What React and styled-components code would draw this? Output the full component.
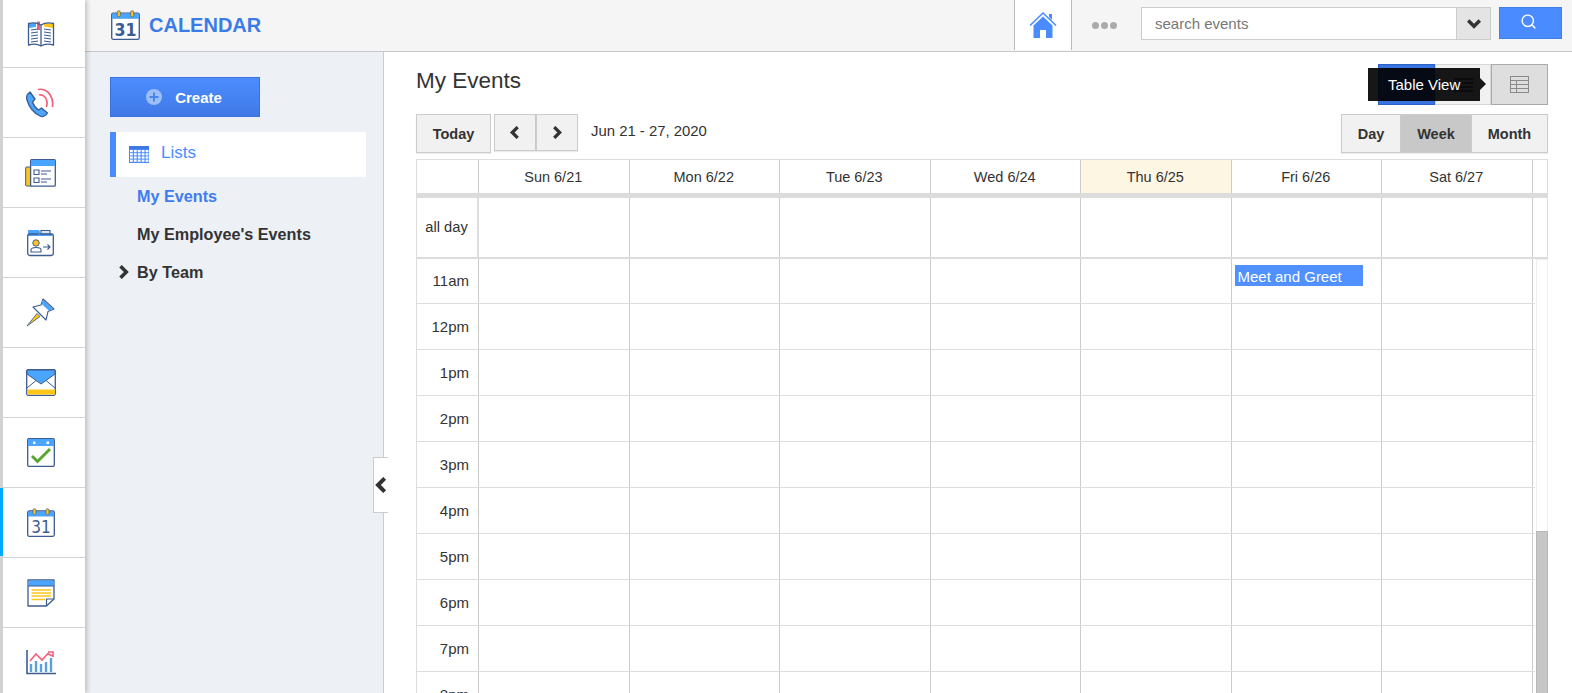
import React from "react";
import styled, { createGlobalStyle } from "styled-components";
import { Search } from "lucide-react";

const GlobalStyle = createGlobalStyle`
  html, body {
    margin: 0;
    padding: 0;
    height: 100%;
    overflow: hidden;
    background: #fff;
    font-family: "Liberation Sans", Arial, sans-serif;
    color: #333;
  }
  * {
    box-sizing: border-box;
  }
`;

const INK = "#3d5c8f";
const SKY = "#4aa5ff";
const GOLD = "#ffc61a";
const ROSE = "#f2607c";
const GRID_COLUMNS = "62px repeat(7, 150.5px)";

const Page = styled.div`
  display: flex;
  height: 100vh;
  overflow: hidden;
`;

const Rail = styled.nav`
  width: 85px;
  flex: none;
  border-left: 3px solid #d2d2d2;
  background: #fff;
  box-shadow: 2px 0 5px rgba(0, 0, 0, 0.22);
  position: relative;
  z-index: 3;
`;

const RailItem = styled.div`
  height: 70px;
  display: flex;
  align-items: center;
  justify-content: center;
  border-bottom: 1px solid #d4d4d4;
  position: relative;
  padding-right: 7px;

  &:first-child {
    height: 68px;
  }

  ${(p) =>
    p.$active &&
    `
    &::before {
      content: "";
      position: absolute;
      left: -3px;
      top: 0;
      bottom: 1px;
      width: 3px;
      background: #00aaff;
    }
  `}
`;

const Column = styled.div`
  flex: 1;
  min-width: 0;
  display: flex;
  flex-direction: column;
`;

const TopBar = styled.header`
  height: 52px;
  flex: none;
  display: flex;
  align-items: stretch;
  background: #f5f5f5;
  border-bottom: 1px solid #c8c8c8;
  padding: 0 10px 0 26px;
`;

const Brand = styled.div`
  display: flex;
  align-items: center;
  gap: 9px;
  flex: 1;
  font-size: 20px;
  font-weight: bold;
  color: #3b7be8;
`;

const HomeCell = styled.div`
  width: 58px;
  height: 50px;
  display: flex;
  align-items: center;
  justify-content: center;
  background: #fff;
  border-left: 1px solid #bbb;
  border-right: 1px solid #bbb;
`;

const Dots = styled.div`
  width: 69px;
  padding-right: 5px;
  display: flex;
  align-items: center;
  justify-content: center;
  gap: 2px;
  span {
    width: 7px;
    height: 7px;
    border-radius: 50%;
    background: #aaa;
  }
`;

const SearchBox = styled.div`
  width: 350px;
  height: 33px;
  margin-top: 7px;
  display: flex;
  border: 1px solid #ccc;
  background: #fff;
`;

const SearchText = styled.div`
  flex: 1;
  padding-left: 13px;
  font-size: 15px;
  line-height: 31px;
  color: #777;
`;

const SearchCaret = styled.div`
  width: 34px;
  display: flex;
  align-items: center;
  justify-content: center;
  background: #e4e4e4;
  border-left: 1px solid #ccc;
`;

const SearchButton = styled.div`
  width: 63px;
  height: 32px;
  margin: 7px 0 0 8px;
  display: flex;
  align-items: center;
  justify-content: center;
  background: #4a8cff;
  border: 1px solid #3f80ee;
  padding-right: 5px;
  padding-bottom: 3px;
`;

const Content = styled.div`
  flex: 1;
  min-height: 0;
  display: flex;
`;

const Sidebar = styled.aside`
  width: 299px;
  flex: none;
  position: relative;
  background: #edf0f5;
  border-right: 1px solid #ccc;
  padding: 25px 0 0 25px;
`;

const CreateButton = styled.div`
  width: 150px;
  height: 40px;
  display: flex;
  align-items: center;
  justify-content: center;
  gap: 13px;
  padding-right: 2px;
  color: #fff;
  font-size: 15px;
  font-weight: bold;
  background: linear-gradient(#4c8dff, #4079e6);
  border: 1px solid #3a72e0;
`;

const ListsRow = styled.div`
  width: 256px;
  height: 45px;
  margin-top: 15px;
  display: flex;
  align-items: center;
  gap: 12px;
  padding-left: 13px;
  background: #fff;
  border-left: 6px solid #4a8cff;
  color: #4a8cff;
  font-size: 17px;
  span {
    margin-top: -3px;
  }
`;

const SideLink = styled.div`
  position: relative;
  margin-left: 27px;
  height: 38px;
  line-height: 38px;
  font-size: 16.2px;
  font-weight: bold;
  color: ${(p) => (p.$current ? "#3f7cf0" : "#333")};
`;

const SideList = styled.div`
  margin-top: 0;
`;

const Caret = styled.span`
  position: absolute;
  left: -20px;
  top: 12px;
  display: flex;
`;

const CollapseHandle = styled.div`
  position: absolute;
  top: 405px;
  right: -5px;
  width: 15px;
  height: 56px;
  padding-left: 2px;
  display: flex;
  align-items: center;
  justify-content: center;
  background: #fff;
  border: 1px solid #ccc;
  border-right: none;
  z-index: 2;
`;

const Main = styled.main`
  flex: 1;
  min-width: 0;
  padding: 12px 24px 0 32px;
  overflow: hidden;
`;

const TitleRow = styled.div`
  height: 41px;
  display: flex;
  justify-content: space-between;
  align-items: flex-start;
`;

const Title = styled.h1`
  margin: 4px 0 0;
  font-size: 22.5px;
  font-weight: normal;
  line-height: 26px;
  color: #333;
`;

const ViewSwitch = styled.div`
  display: flex;
  position: relative;
`;

const ViewButton = styled.div`
  width: ${(p) => p.$width}px;
  height: 41px;
  display: flex;
  align-items: center;
  justify-content: center;
  background: ${(p) =>
    p.$kind === "blue" ? "#3a74e2" : p.$kind === "grey" ? "#dedede" : "#f1f1f1"};
  border: 1px solid
    ${(p) =>
      p.$kind === "blue" ? "#2a62c8" : p.$kind === "grey" ? "#aaa" : "#d6d6d6"};
`;

const Tooltip = styled.div`
  position: absolute;
  left: -10px;
  top: 4px;
  width: 112px;
  height: 33px;
  display: flex;
  align-items: center;
  padding-left: 20px;
  background: rgba(0, 0, 0, 0.91);
  color: #fff;
  font-size: 15px;
  white-space: nowrap;
  z-index: 2;

  &::after {
    content: "";
    position: absolute;
    left: 100%;
    top: 10px;
    border-left: 6px solid rgba(0, 0, 0, 0.91);
    border-top: 6px solid transparent;
    border-bottom: 6px solid transparent;
  }
`;

const ToolRow = styled.div`
  margin-top: 9px;
  height: 39px;
  display: flex;
  align-items: flex-start;
`;

const PlainButton = styled.div`
  height: ${(p) => p.$height || 39}px;
  width: ${(p) => p.$width}px;
  display: flex;
  align-items: center;
  justify-content: center;
  background: ${(p) => (p.$on ? "#c8c8c8" : "#f1f1f1")};
  border: 1px solid #ccc;
  box-shadow: 0 1px 1px rgba(0, 0, 0, 0.08);
  font-size: 14.5px;
  font-weight: bold;
  color: #333;
  margin-left: ${(p) => p.$gap || 0}px;
`;

const DateRange = styled.div`
  margin-left: 13px;
  flex: 1;
  height: 34px;
  line-height: 34px;
  font-size: 14.9px;
  color: #333;
`;

const Segments = styled.div`
  display: flex;
`;

const Board = styled.section`
  margin-top: 6px;
`;

const HeadRow = styled.div`
  display: grid;
  grid-template-columns: ${GRID_COLUMNS} 1fr;
  height: 39px;
  border: 1px solid #ddd;
  border-bottom: 5px solid #dcdcdc;
`;

const HeadCell = styled.div`
  display: flex;
  align-items: center;
  justify-content: center;
  padding-right: 1px;
  font-size: 14.5px;
  color: #333;
  background: ${(p) => (p.$today ? "#fdf6e3" : "#fff")};
  border-right: 1px solid #ccc;
  &:last-child {
    border-right: none;
  }
`;

const AllDayRow = styled(HeadRow)`
  height: 59px;
  border-top: none;
  border-bottom: none;
`;

const AllDayLabel = styled(HeadCell)`
  font-size: 14.7px;
  padding-bottom: 1px;
  border-right: 2px solid #ddd;
`;

const Divider = styled.div`
  height: 2px;
  background: #dcdcdc;
`;

const TimedArea = styled.div`
  display: flex;
`;

const Rows = styled.div`
  flex: 1;
  min-width: 0;
  border-left: 1px solid #ddd;
`;

const HourRow = styled.div`
  display: grid;
  grid-template-columns: ${GRID_COLUMNS};
  height: ${(p) => (p.$first ? 45 : 46)}px;
  border-bottom: 1px solid #ddd;
`;

const HourLabel = styled.div`
  display: flex;
  align-items: center;
  justify-content: flex-end;
  padding-right: 9px;
  padding-bottom: ${(p) => (p.$first ? 1 : 0)}px;
  font-size: 15px;
  color: #333;
  border-right: 1px solid #ccc;
`;

const HourCell = styled.div`
  position: relative;
  border-right: 1px solid #ccc;
`;

const EventChip = styled.div`
  position: absolute;
  left: 3px;
  top: 6px;
  width: 128px;
  height: 21px;
  padding-left: 3px;
  line-height: 23px;
  font-size: 15px;
  color: #fff;
  background: #5091ff;
`;

const ScrollTrack = styled.div`
  width: 12px;
  margin-left: 1px;
  flex: none;
  height: 434px;
  display: flex;
  flex-direction: column;
  justify-content: flex-end;
  border: 1px solid #eee;
  border-bottom: none;
`;

const ScrollThumb = styled.div`
  height: 162px;
  margin: 0 -1px;
  background: #c6c6c6;
  border: 1px solid #b8b8b8;
  border-width: 1px 1px 0;
`;

const Chevron = ({ dir = "right", size = 10, width = 3, color = "#333" }) => {
  const points = {
    right: "3,1 8,6 3,11",
    left: "8,1 3,6 8,11",
    down: "1,3 6,8 11,3",
  }[dir];
  return (
    <svg width={size} height={size} viewBox="0 0 12 12" style={{ flex: "none" }}>
      <polyline points={points} fill="none" stroke={color} strokeWidth={width} />
    </svg>
  );
};

const BookIcon = () => (
  <svg width="30" height="26" viewBox="0 0 30 26" fill="none">
    <path d="M3 3 L12 1 L15 4 V24 L12 22 L2 24 Z" fill="#fff" />
    <path d="M3 3 L10 1.5 V6 L3 7 Z" fill={SKY} />
    <path d="M18 2 L27 3 V7 L18 5.5 Z" fill={GOLD} />
    <path d="M11 0.5 H14 V9 H11 Z" fill={ROSE} />
    <path
      d="M15 4 C12 2 8 1 2.5 2.5 V24 C8 22.5 12 23 15 25 C18 23 22 22.5 27.5 24 V2.5 C22 1 18 2 15 4 V25"
      stroke={INK}
      strokeWidth="1.3"
    />
    <path
      d="M5 9 L12 8 M5 12 L12 11 M5 15 L12 14 M5 18 L12 17 M5 21 L12 20 M18 8 L25 9 M18 11 L25 12 M18 14 L25 15 M18 17 L25 18 M18 20 L25 21"
      stroke={INK}
      strokeWidth="1.1"
    />
  </svg>
);

const PhoneIcon = () => (
  <svg width="30" height="31" viewBox="0 0 30 31" fill="none">
    <path
      d="M4 5 C1 7 0 10 1 13 C3 20 8 26 14 29 C17 30.5 20 28.5 21.5 26 L15.5 21 L12.5 23 C9.5 21 7.5 18 6.5 15 L9 12 Z"
      fill={SKY}
      stroke={INK}
      strokeWidth="1.3"
      strokeLinejoin="round"
    />
    <path d="M12 2.5 C20 1 28 8 26.5 20" stroke={ROSE} strokeWidth="1.7" />
    <path d="M13 8 C18 7 22.5 12 20.5 20" stroke={ROSE} strokeWidth="1.7" />
  </svg>
);

const FormIcon = () => (
  <svg width="31" height="28" viewBox="0 0 31 28" fill="none">
    <rect x="0.7" y="8" width="7" height="19" rx="1" fill={GOLD} stroke={INK} strokeWidth="1" />
    <rect x="5.6" y="0.7" width="24.7" height="26.5" rx="1" fill="#fff" stroke={INK} strokeWidth="1.3" />
    <rect x="6" y="1" width="24" height="6" fill={SKY} />
    <path d="M9 11 H14 V15.5 H9 Z M9 19 H14 V23.5 H9 Z" stroke={INK} strokeWidth="1.1" />
    <path d="M16 12 H26 M16 15 H22 M16 20 H26 M16 23 H22" stroke={INK} strokeWidth="1.2" />
  </svg>
);

const FolderIcon = () => (
  <svg width="27" height="28" viewBox="0 0 27 28" fill="none">
    <path d="M14 4 V1.5 H23 V5" fill="#dbe6f5" stroke={INK} strokeWidth="1.1" />
    <path d="M1 7 V1.5 H12 L14 4.5 H25 V7 Z" fill={SKY} />
    <rect x="0.7" y="5" width="25.6" height="21.5" rx="2" stroke={INK} strokeWidth="1.3" />
    <path d="M1 1.5 H12 V6" stroke={SKY} strokeWidth="1" />
    <circle cx="9" cy="14" r="3.2" fill={GOLD} stroke={INK} strokeWidth="1" />
    <path d="M4 23 V21 C4 19 6 18.5 9 18.5 C12 18.5 14 19 14 21 V23 Z" fill="#fff" stroke={INK} strokeWidth="1.1" />
    <path d="M16 18 H23 M20.5 15.5 L23 18 L20.5 20.5" stroke={INK} strokeWidth="1.1" />
  </svg>
);

const PinIcon = () => (
  <svg width="29" height="29" viewBox="0 0 29 29" fill="none">
    <path d="M1 28 L11 15.5 L14 18.5 Z" fill={GOLD} stroke={INK} strokeWidth="0.9" strokeLinejoin="round" />
    <path
      d="M17 1 L28 11 L22 13.5 L20 22 L7 9 L15 7 Z"
      fill="#fff"
      stroke={INK}
      strokeWidth="1.1"
      strokeLinejoin="round"
    />
    <path d="M17 1.7 L27 11 L23 12.7 L15.7 6 Z" fill={SKY} />
  </svg>
);

const MailIcon = () => (
  <svg width="30" height="27" viewBox="0 0 30 27" fill="none">
    <rect x="0.7" y="0.7" width="28.6" height="25.6" rx="1.5" fill="#fff" stroke={INK} strokeWidth="1.3" />
    <path d="M1 20.5 H29 V25.5 H1 Z" fill={GOLD} />
    <path d="M1 1 H29 V5 L15 15 L1 5 Z" fill={SKY} stroke={INK} strokeWidth="1" strokeLinejoin="round" />
    <path d="M1 19 L10 11.5 M29 19 L20 11.5" stroke={INK} strokeWidth="1" />
  </svg>
);

const CheckIcon = () => (
  <svg width="28" height="29" viewBox="0 0 28 29" fill="none">
    <rect x="0.7" y="0.7" width="26.6" height="27.6" rx="1" fill="#fff" stroke={INK} strokeWidth="1.3" />
    <rect x="1" y="1" width="26" height="7" fill={SKY} />
    <rect x="6" y="3.5" width="2.5" height="2.5" fill="#fff" />
    <rect x="19.5" y="3.5" width="2.5" height="2.5" fill="#fff" />
    <path d="M5 18 L10.5 23.5 L23 11" stroke="#5aa532" strokeWidth="3" />
  </svg>
);

const CalendarIcon = ({ size = 28 }) => (
  <svg width={size} height={(size * 29) / 28} viewBox="0 0 28 29" fill="none">
    <rect x="0.7" y="3" width="26.6" height="25.3" rx="1.5" fill="#fff" stroke={INK} strokeWidth="1.3" />
    <path d="M1 3.5 H27 V8.5 H1 Z" fill={SKY} />
    <rect x="6" y="0.7" width="3" height="6" rx="1.5" fill={GOLD} stroke={INK} strokeWidth="0.7" />
    <rect x="19" y="0.7" width="3" height="6" rx="1.5" fill={GOLD} stroke={INK} strokeWidth="0.7" />
    <text
      x="14"
      y="25"
      textAnchor="middle"
      fontFamily="'DejaVu Sans Condensed', 'DejaVu Sans', sans-serif"
      fontSize="17"
      fill={INK}
    >
      31
    </text>
  </svg>
);

const NoteIcon = () => (
  <svg width="28" height="28" viewBox="0 0 28 28" fill="none">
    <path d="M1 1 H27 V20 L19.5 27 H1 Z" fill="#fff" stroke={INK} strokeWidth="1.3" strokeLinejoin="round" />
    <path d="M1.5 1.5 H26.5 V7 H1.5 Z" fill={SKY} />
    <path d="M1 7 H27" stroke={INK} strokeWidth="1" />
    <path d="M4.5 11 H24 M4.5 14 H24 M4.5 17 H24 M4.5 20.5 H18" stroke={GOLD} strokeWidth="1.4" />
    <path d="M27 20 H19.5 V27" stroke={INK} strokeWidth="1.2" />
  </svg>
);

const ChartIcon = () => (
  <svg width="30" height="25" viewBox="0 0 30 25" fill="none">
    <path d="M1 0 V23.5 H30" stroke={INK} strokeWidth="1.6" />
    <path d="M5 22 V14 M10 22 V11 M15 22 V14 M20 22 V12 M25 22 V8" stroke="#5aa0dc" strokeWidth="2.4" />
    <path d="M4 11 L10 4 L16 10 L22 3.5 L26 6 M22 2 H27 V7" stroke={ROSE} strokeWidth="1.6" />
  </svg>
);

const HomeIcon = () => (
  <svg width="28" height="28" viewBox="0 0 28 28" fill="none">
    <path d="M1 14.5 L14 2 L27 14.5" stroke="#4a8cff" strokeWidth="1.6" />
    <path d="M20 3 H23 V9 L20 6 Z" fill="#4a8cff" />
    <path d="M4.5 14.5 L14 5.5 L23.5 14.5 V27 H17 V19 H11 V27 H4.5 Z" fill="#4a8cff" />
  </svg>
);

const PlusCircle = () => (
  <svg width="16" height="16" viewBox="0 0 16 16">
    <circle cx="8" cy="8" r="8" fill="#9dbff8" />
    <path d="M8 3.5 V12.5 M3.5 8 H12.5" stroke="#4a84ee" strokeWidth="2" />
  </svg>
);

const GridIcon = () => (
  <svg width="20" height="17" viewBox="0 0 20 17">
    <rect width="20" height="17" fill="#4a8cff" />
    <rect width="20" height="3" fill="#3f78e0" />
    {[0, 1, 2, 3].map((row) =>
      [0, 1, 2, 3, 4].map((col) => (
        <rect
          key={`${row}-${col}`}
          x={1 + col * 3.9}
          y={4 + row * 3.2}
          width="2.8"
          height="2.2"
          fill="#fff"
        />
      ))
    )}
  </svg>
);

const TableIcon = () => (
  <svg width="19" height="17" viewBox="0 0 19 17" fill="none" stroke="#8a8a8a">
    <rect x="0.5" y="0.5" width="18" height="16" />
    <path d="M0.5 4.5 H18.5 M0.5 8.5 H18.5 M0.5 12.5 H18.5 M6.5 4.5 V16.5" />
  </svg>
);

const ListIcon = () => (
  <svg width="19" height="14" viewBox="0 0 19 14" fill="none" stroke="#555" strokeWidth="1.5">
    <path d="M0 1 H19 M0 5 H19 M0 9 H19 M0 13 H19" />
  </svg>
);

const railIcons = [
  BookIcon,
  PhoneIcon,
  FormIcon,
  FolderIcon,
  PinIcon,
  MailIcon,
  CheckIcon,
  CalendarIcon,
  NoteIcon,
  ChartIcon,
];

const days = [
  "Sun 6/21",
  "Mon 6/22",
  "Tue 6/23",
  "Wed 6/24",
  "Thu 6/25",
  "Fri 6/26",
  "Sat 6/27",
];

const hours = ["11am", "12pm", "1pm", "2pm", "3pm", "4pm", "5pm", "6pm", "7pm", "8pm"];

const App = () => {
  return (
    <Page>
      <GlobalStyle />
      <Rail>
        {railIcons.map((Icon, index) => (
          <RailItem key={index} $active={index === 7}>
            <Icon />
          </RailItem>
        ))}
      </Rail>
      <Column>
        <TopBar>
          <Brand>
            <CalendarIcon size={29} />
            CALENDAR
          </Brand>
          <HomeCell>
            <HomeIcon />
          </HomeCell>
          <Dots>
            <span />
            <span />
            <span />
          </Dots>
          <SearchBox>
            <SearchText>search events</SearchText>
            <SearchCaret>
              <Chevron dir="down" size={14} width={3} />
            </SearchCaret>
          </SearchBox>
          <SearchButton>
            <Search size={17} color="#fff" strokeWidth={2} />
          </SearchButton>
        </TopBar>
        <Content>
          <Sidebar>
            <CreateButton>
              <PlusCircle />
              Create
            </CreateButton>
            <ListsRow>
              <GridIcon />
              <span>Lists</span>
            </ListsRow>
            <SideList>
              <SideLink $current>My Events</SideLink>
              <SideLink>My Employee's Events</SideLink>
              <SideLink>
                <Caret>
                  <Chevron size={14} />
                </Caret>
                By Team
              </SideLink>
            </SideList>
            <CollapseHandle>
              <Chevron dir="left" size={16} />
            </CollapseHandle>
          </Sidebar>
          <Main>
            <TitleRow>
              <Title>My Events</Title>
              <ViewSwitch>
                <ViewButton $width={57} $kind="blue" />
                <ViewButton $width={56}>
                  <ListIcon />
                </ViewButton>
                <ViewButton $width={57} $kind="grey">
                  <TableIcon />
                </ViewButton>
                <Tooltip>Table View</Tooltip>
              </ViewSwitch>
            </TitleRow>
            <ToolRow>
              <PlainButton $width={75}>Today</PlainButton>
              <PlainButton $width={42} $height={37} $gap={3}>
                <Chevron dir="left" size={13} />
              </PlainButton>
              <PlainButton $width={42} $height={37}>
                <Chevron size={13} />
              </PlainButton>
              <DateRange>Jun 21 - 27, 2020</DateRange>
              <Segments>
                <PlainButton $width={60}>Day</PlainButton>
                <PlainButton $width={70} $on>
                  Week
                </PlainButton>
                <PlainButton $width={77}>Month</PlainButton>
              </Segments>
            </ToolRow>
            <Board>
              <HeadRow>
                <HeadCell />
                {days.map((day) => (
                  <HeadCell key={day} $today={day === "Thu 6/25"}>
                    {day}
                  </HeadCell>
                ))}
                <HeadCell />
              </HeadRow>
              <AllDayRow>
                <AllDayLabel>all day</AllDayLabel>
                {days.map((day) => (
                  <HeadCell key={day} />
                ))}
                <HeadCell />
              </AllDayRow>
              <Divider />
              <TimedArea>
                <Rows>
                  {hours.map((hour, index) => (
                    <HourRow key={hour} $first={index === 0}>
                      <HourLabel $first={index === 0}>{hour}</HourLabel>
                      {days.map((day) => (
                        <HourCell key={day}>
                          {index === 0 && day === "Fri 6/26" && (
                            <EventChip>Meet and Greet</EventChip>
                          )}
                        </HourCell>
                      ))}
                    </HourRow>
                  ))}
                </Rows>
                <ScrollTrack>
                  <ScrollThumb />
                </ScrollTrack>
              </TimedArea>
            </Board>
          </Main>
        </Content>
      </Column>
    </Page>
  );
};

export default App;
